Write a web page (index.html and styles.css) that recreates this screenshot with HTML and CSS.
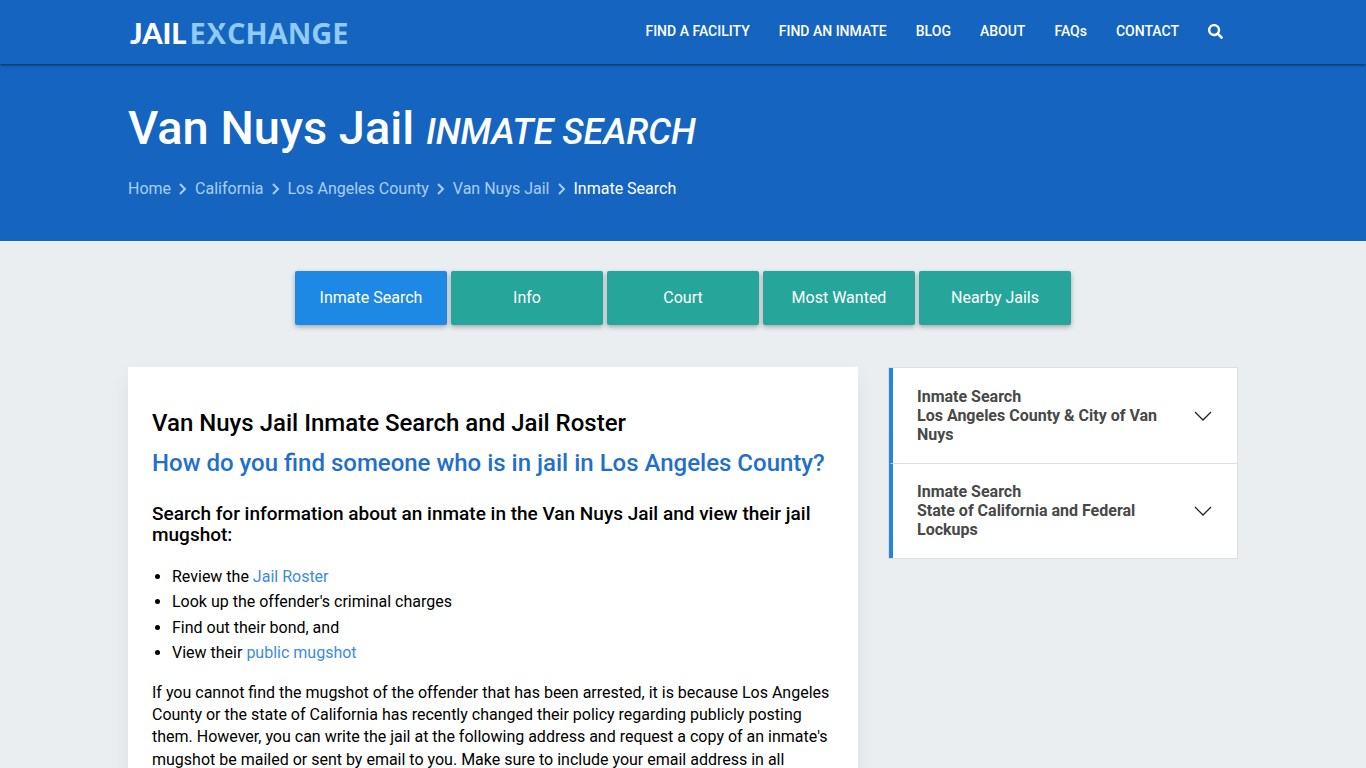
FILE: index.html
```html
<!DOCTYPE html>
<html lang="en">
<head>
    <meta charset="utf-8">
    <meta name="viewport" content="width=device-width, initial-scale=1">
    <title>Van Nuys Jail Inmate Search</title>
    <link rel="stylesheet" href="styles.css">
</head>
<body>
<header class="site-header">
    <div class="container header-inner">
        <a href="#" class="logo"><span class="logo-jail">JAIL</span><span class="logo-exchange">E<span class="logo-x">X</span>CHANGE</span></a>
        <nav class="main-nav">
            <a href="#">FIND A FACILITY</a>
            <a href="#">FIND AN INMATE</a>
            <a href="#">BLOG</a>
            <a href="#">ABOUT</a>
            <a href="#">FAQs</a>
            <a href="#">CONTACT</a>
            <a href="#" class="search-link" aria-label="Search">
                <svg width="15" height="15" viewBox="0 0 512 512" fill="currentColor"><path d="M505 442.700L405.300 343c-4.500-4.500-10.600-7-17-7H372c27.600-35.300 44-79.700 44-128C416 93.100 322.900 0 208 0S0 93.100 0 208s93.100 208 208 208c48.300 0 92.700-16.400 128-44v16.300c0 6.400 2.500 12.500 7 17l99.700 99.700c9.400 9.400 24.600 9.400 33.900 0l28.300-28.300c9.400-9.400 9.400-24.600.1-34zM208 336c-70.700 0-128-57.200-128-128 0-70.700 57.200-128 128-128 70.700 0 128 57.200 128 128 0 70.700-57.200 128-128 128z"/></svg>
            </a>
        </nav>
    </div>
</header>

<section class="banner">
    <div class="container">
        <h1>Van Nuys Jail <em>INMATE SEARCH</em></h1>
        <nav class="breadcrumb" aria-label="Breadcrumb">
            <a href="#">Home</a>
            <svg class="crumb-arrow" width="8" height="12" viewBox="0 0 8 12"><path d="M1 1l5 5-5 5"/></svg>
            <a href="#">California</a>
            <svg class="crumb-arrow" width="8" height="12" viewBox="0 0 8 12"><path d="M1 1l5 5-5 5"/></svg>
            <a href="#">Los Angeles County</a>
            <svg class="crumb-arrow" width="8" height="12" viewBox="0 0 8 12"><path d="M1 1l5 5-5 5"/></svg>
            <a href="#">Van Nuys Jail</a>
            <svg class="crumb-arrow" width="8" height="12" viewBox="0 0 8 12"><path d="M1 1l5 5-5 5"/></svg>
            <span class="current">Inmate Search</span>
        </nav>
    </div>
</section>

<nav class="tabs">
    <a href="#" class="tab active">Inmate Search</a>
    <a href="#" class="tab">Info</a>
    <a href="#" class="tab">Court</a>
    <a href="#" class="tab">Most Wanted</a>
    <a href="#" class="tab">Nearby Jails</a>
</nav>

<div class="container columns">
    <main class="card">
        <h2>Van Nuys Jail Inmate Search and Jail Roster</h2>
        <h2 class="question">How do you find someone who is in jail in Los Angeles County?</h2>
        <h3>Search for information about an inmate in the Van Nuys Jail and view their jail mugshot:</h3>
        <ul>
            <li>Review the <a href="#">Jail Roster</a></li>
            <li>Look up the offender's criminal charges</li>
            <li>Find out their bond, and</li>
            <li>View their <a href="#">public mugshot</a></li>
        </ul>
        <p>If you cannot find the mugshot of the offender that has been arrested, it is because Los Angeles County or the state of California has recently changed their policy regarding publicly posting them. However, you can write the jail at the following address and request a copy of an inmate's mugshot be mailed or sent by email to you. Make sure to include your email address in all</p>
    </main>

    <aside class="accordion">
        <button type="button" class="accordion-item">
            <span>Inmate Search<br>Los Angeles County &amp; City of Van Nuys</span>
            <svg width="18" height="10" viewBox="0 0 18 10"><path d="M1 1l8 8 8-8"/></svg>
        </button>
        <button type="button" class="accordion-item">
            <span>Inmate Search<br>State of California and Federal Lockups</span>
            <svg width="18" height="10" viewBox="0 0 18 10"><path d="M1 1l8 8 8-8"/></svg>
        </button>
    </aside>
</div>
</body>
</html>
```
FILE: styles.css
```css
* {
    box-sizing: border-box;
}

body {
    margin: 0;
    background-color: #eaeef1;
    font-family: Roboto, "Liberation Sans", sans-serif;
    font-size: 16px;
    color: #000;
}

a {
    color: #3d8be0;
    text-decoration: none;
}

.container {
    max-width: 1140px;
    margin: 0 auto;
    padding: 0 15px;
}

/* Top bar */
.site-header {
    position: relative;
    background-color: #1565c0;
    box-shadow: 0 1px 3px rgba(0, 0, 0, 0.6);
}

.header-inner {
    display: flex;
    justify-content: space-between;
    align-items: center;
    height: 64px;
    padding-bottom: 2px;
}

.logo {
    display: flex;
    align-items: baseline;
    gap: 3px;
    padding: 4px 0 0 2px;
    font-size: 29px;
    line-height: 40px;
    color: #fff;
}

.logo-jail {
    font-family: Lato, sans-serif;
    font-weight: 900;
}

.logo-exchange {
    font-family: "Open Sans", sans-serif;
    font-weight: 700;
    color: #90caf9;
}

/* cut through the thin stroke of the X */
.logo-x {
    position: relative;
    margin: 0 1px;
}

.logo-x::after {
    content: "";
    position: absolute;
    left: 12px;
    top: 12px;
    width: 2px;
    height: 13px;
    background-color: #1565c0;
    transform: rotate(-34deg);
}

.main-nav {
    display: flex;
    align-items: center;
    gap: 29px;
    padding-right: 15px;
}

.main-nav a {
    color: #fff;
    font-size: 14px;
    font-weight: 500;
    line-height: 20px;
}

.search-link {
    display: flex;
    align-items: center;
}

/* Page title */
.banner {
    padding: 32px 0 42px;
    background-color: #1565c0;
}

h1 {
    margin: 0 0 15px;
    color: #fff;
    font-size: 47px;
    font-weight: 500;
    line-height: 64px;
}

h1 em {
    font-size: 36px;
}

.breadcrumb {
    display: flex;
    flex-wrap: wrap;
    align-items: center;
    gap: 8px;
    line-height: 20px;
}

.breadcrumb a {
    color: #a9cdf3;
}

.breadcrumb .current {
    color: #fff;
}

.crumb-arrow {
    fill: none;
    stroke: #a9cdf3;
    stroke-width: 2;
}

/* Section buttons */
.tabs {
    display: flex;
    flex-wrap: wrap;
    justify-content: center;
    gap: 4px;
    padding: 30px 0 42px;
}

.tab {
    width: 152px;
    border-radius: 2px;
    background-color: #26a69a;
    box-shadow: 0 2px 5px rgba(0, 0, 0, 0.3);
    color: #fff;
    line-height: 54px;
    text-align: center;
}

.tab.active {
    background-color: #1e88e5;
}

/* Content and sidebar */
.columns {
    display: grid;
    grid-template-columns: 730fr 350fr;
    gap: 30px;
    align-items: start;
}

.card {
    padding: 40px 24px;
    background-color: #fff;
    box-shadow: 0 8px 20px rgba(0, 0, 0, 0.06);
}

h2 {
    margin: 0 0 8px;
    font-size: 24px;
    font-weight: 500;
    line-height: 32px;
}

.question {
    color: #1f6fcb;
}

h3 {
    margin: 24px 0 21px;
    font-size: 19px;
    font-weight: 500;
    line-height: 21px;
}

.card ul {
    margin: 0 0 17px;
    padding-left: 20px;
    line-height: 1.4;
}

.card li {
    margin-bottom: 3px;
}

.card p {
    margin: 0;
    line-height: 1.4;
}

.accordion {
    border: 1px solid #dcdfe2;
}

.accordion-item {
    display: flex;
    justify-content: space-between;
    align-items: center;
    gap: 16px;
    width: 100%;
    padding: 19px 25px 19px 24px;
    border: none;
    border-left: 4px solid #2785d8;
    background-color: #fff;
    color: #484848;
    font-family: inherit;
    font-size: 16px;
    font-weight: 700;
    line-height: 19px;
    text-align: left;
    cursor: pointer;
}

.accordion-item + .accordion-item {
    border-top: 1px solid #dcdfe2;
    padding-top: 18px;
}

.accordion-item svg {
    flex: none;
    fill: none;
    stroke: #222;
    stroke-width: 1.3;
}
```
